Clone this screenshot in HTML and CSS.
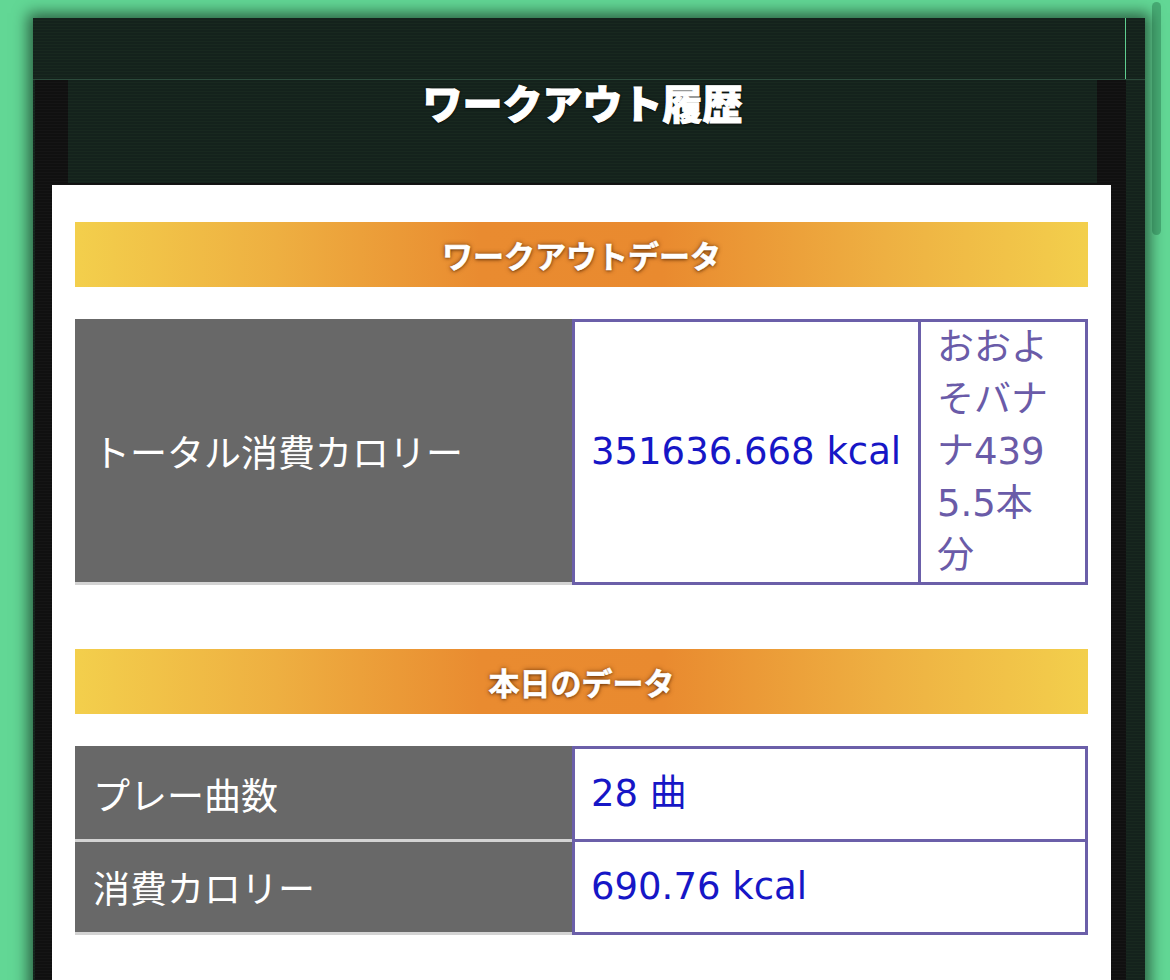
FILE: index.html
```html
<!DOCTYPE html>
<html lang="ja">
<head>
<meta charset="utf-8">
<title>ワークアウト履歴</title>
<link rel="stylesheet" href="styles.css">
</head>
<body>
<div class="frame">
  <div class="topbar"><div class="topbar-inner"></div></div>
  <div class="page">
    <header class="titlebar">
      <h1 class="title">ワークアウト履歴</h1>
    </header>
    <main class="sheet">
      <section class="block">
        <h2 class="band">ワークアウトデータ</h2>
        <div class="stats stats-total">
          <div class="label">トータル消費カロリー</div>
          <div class="value">351636.668 kcal</div>
          <div class="note">おおよそバナナ4395.5本分</div>
        </div>
      </section>
      <section class="block">
        <h2 class="band">本日のデータ</h2>
        <div class="stats stats-today">
          <div class="label">プレー曲数</div>
          <div class="value">28 曲</div>
          <div class="label">消費カロリー</div>
          <div class="value value-next">690.76 kcal</div>
        </div>
      </section>
    </main>
  </div>
</div>
<div class="scrollbar"></div>
</body>
</html>
```
FILE: styles.css
```css
html, body {
  margin: 0;
  padding: 0;
}

body {
  height: 980px;
  overflow: hidden;
  background: #62d795;
  font-family: "DejaVu Sans", "Noto Sans CJK JP", sans-serif;
}

/* dark scanline frame */
.frame {
  width: 1112px;
  height: 1000px;
  margin: 18px 0 0 33px;
  background: repeating-linear-gradient(to bottom, #14221c 0, #14221c 2px, #18281f 2px, #18281f 3px);
  box-shadow: 0 0 14px 5px rgba(0, 0, 0, 0.55);
  display: flex;
  flex-direction: column;
}

.topbar {
  height: 61px;
  border-bottom: 1px solid #2c4a3b;
}

.topbar-inner {
  width: 1092px;
  height: 100%;
  border-right: 1px solid #5fcf90;
}

.page {
  width: 1091px;
  margin-left: 2px;
  flex: 1;
  background: repeating-linear-gradient(to bottom, #101010 0, #101010 2px, #151515 2px, #151515 3px);
  display: flex;
  flex-direction: column;
}

.titlebar {
  height: 103px;
  margin: 0 29px 0 33px;
  background: repeating-linear-gradient(to bottom, #14221c 0, #14221c 2px, #18281f 2px, #18281f 3px);
}

.title {
  margin: 0;
  text-align: center;
  font-family: "Noto Sans CJK JP", sans-serif;
  font-weight: 900;
  font-size: 40px;
  line-height: 44px;
  color: #ffffff;
  -webkit-text-stroke: 1px #ffffff;
  text-shadow: 0 1px 2px #000, 0 0 3px rgba(0, 0, 0, 0.8);
}

.sheet {
  flex: 1;
  margin: 2px 15px 0 17px;
  padding: 37px 23px 0;
  background: #ffffff;
}

.block + .block {
  margin-top: 64px;
}

.band {
  margin: 0 0 32px;
  height: 65px;
  line-height: 65px;
  text-align: center;
  font-family: "Noto Sans CJK JP", sans-serif;
  font-weight: 700;
  font-size: 31px;
  color: #ffffff;
  -webkit-text-stroke: 0.6px #ffffff;
  text-shadow: 0 0 5px rgba(90, 40, 0, 0.8), 0 1px 3px rgba(70, 30, 0, 0.6);
  background: linear-gradient(90deg, #f3cf4c 0%, #eeaf41 20%, #e98b30 40%, #e98a2f 58%, #eeb042 80%, #f3cf4c 100%);
}

/* data grids */
.stats {
  display: grid;
  font-size: 37px;
}

.stats-total {
  grid-template-columns: 497px 349px 1fr;
}

.stats-today {
  grid-template-columns: 497px 1fr;
}

.label {
  display: flex;
  align-items: center;
  padding: 0 18px;
  background: #686868;
  color: #ffffff;
  font-family: "Noto Sans CJK JP", sans-serif;
  border-bottom: 3px solid #d3d3d3;
  line-height: 52px;
}

.value {
  display: flex;
  align-items: center;
  padding: 0 16px;
  border: 3px solid #6b5fa9;
  color: #1616c6;
  line-height: 52px;
  white-space: nowrap;
}

.stats-today .label,
.stats-today .value {
  padding-top: 19px;
  padding-bottom: 19px;
}

.stats-today .label {
  padding-top: 22px;
}

.stats-today .label + .value + .label {
  padding-top: 19px;
}

.value-next {
  border-top: 0;
}

.note {
  padding: 0 20px 0 16px;
  border: 3px solid #6b5fa9;
  border-left: 0;
  color: #6a5ba8;
  line-height: 52px;
  word-break: break-all;
}

.scrollbar {
  position: absolute;
  top: 2px;
  left: 1152px;
  width: 9px;
  height: 233px;
  border-radius: 5px;
  background: rgba(20, 90, 55, 0.35);
}
```
